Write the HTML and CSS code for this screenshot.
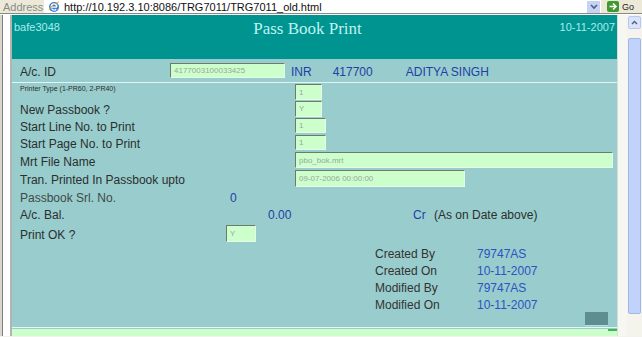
FILE: index.html
```html
<!DOCTYPE html>
<html>
<head>
<meta charset="utf-8">
<link rel="stylesheet" href="styles.css">
</head>
<body>
<div class="addrbar">
  <span class="addr-label">Address</span>
  <div class="addr-field">
    <svg class="ie-icon" width="12" height="12" viewBox="0 0 12 12"><circle cx="6" cy="6" r="5" fill="#3b7fd6"/><path d="M3 6.2h6M3.2 6c0-2 1.3-3 2.8-3s2.8 1 2.8 3M3.6 7.5c.5 1.2 1.3 1.7 2.4 1.7 1 0 1.7-.4 2.2-1.1" stroke="#fff" stroke-width="1.3" fill="none"/><path d="M1 9c2-4 6-7 10-8" stroke="#f0b030" stroke-width="1" fill="none"/></svg>
    <span class="url">http://10.192.3.10:8086/TRG7011/TRG7011_old.html</span>
    <span class="dd"><svg width="8" height="6" viewBox="0 0 8 6"><path d="M1 1l3 3 3-3" stroke="#4d6185" stroke-width="1.6" fill="none"/></svg></span>
  </div>
  <span class="go-btn"><svg width="12" height="11" viewBox="0 0 12 11"><rect width="12" height="11" rx="2" fill="#3d9a2e"/><path d="M2.5 5.5h6M6 2.5l3 3-3 3" stroke="#fff" stroke-width="1.6" fill="none"/></svg></span>
  <span class="go-text">Go</span>
</div>
<div class="window">
  <div class="leftframe"></div>
  <div class="page">
    <div class="header">
      <span class="user">bafe3048</span>
      <span class="title">Pass Book Print</span>
      <span class="hdate">10-11-2007</span>
    </div>
    <div class="form">
      <div class="acrow">
        <span class="lbl w150">A/c. ID</span>
        <div class="field acid">4177003100033425</div>
        <span class="val cur">INR</span>
        <span class="val sol">417700</span>
        <span class="val name">ADITYA SINGH</span>
      </div>
      <div class="sep"></div>
      <div class="row r17 top">
        <span class="lbl tiny w275">Printer Type (1-PR60, 2-PR40)</span>
        <div class="field f27 h16">1</div>
      </div>
      <div class="row r17">
        <span class="lbl w275">New Passbook ?</span>
        <div class="field f27 h16">Y</div>
      </div>
      <div class="row r17">
        <span class="lbl w275">Start Line No. to Print</span>
        <div class="field f31 h15">1</div>
      </div>
      <div class="row r17">
        <span class="lbl w275">Start Page No. to Print</span>
        <div class="field f31 h15">1</div>
      </div>
      <div class="row r18">
        <span class="lbl w275">Mrt File Name</span>
        <div class="field f318 h16">pbo_bok.mrt</div>
      </div>
      <div class="row r18">
        <span class="lbl w275">Tran. Printed In Passbook upto</span>
        <div class="field f170 h17">09-07-2006 00:00:00</div>
      </div>
      <div class="row r18">
        <span class="lbl w210 soft">Passbook Srl. No.</span>
        <span class="val">0</span>
      </div>
      <div class="row r17">
        <span class="lbl w248">A/c. Bal.</span>
        <span class="val bal">0.00</span>
        <span class="val cr">Cr</span>
        <span class="asof">(As on Date above)</span>
      </div>
      <div class="row r22">
        <span class="lbl w206">Print OK ?</span>
        <div class="field f30 h17">Y</div>
      </div>
      <div class="audit">
        <div class="arow"><span class="alabel">Created By</span><span class="aval">79747AS</span></div>
        <div class="arow"><span class="alabel">Created On</span><span class="aval">10-11-2007</span></div>
        <div class="arow"><span class="alabel">Modified By</span><span class="aval">79747AS</span></div>
        <div class="arow"><span class="alabel">Modified On</span><span class="aval">10-11-2007</span></div>
      </div>
      <div class="btnrow"><div class="hidden-btn"></div></div>
    </div>
    <div class="footline"></div>
    <div class="footer"><span class="footmark"></span></div>
  </div>
  <div class="gap"></div>
  <div class="scrollbar">
    <div class="sb-up"><svg width="7" height="5" viewBox="0 0 7 5"><path d="M1 4l2.5-2.5L6 4" stroke="#4d6185" stroke-width="1.4" fill="none"/></svg></div>
    <div class="sb-track"><div class="sb-thumb"></div></div>
  </div>
</div>
</body>
</html>
```
FILE: styles.css
```css
* { box-sizing: border-box; }
html, body { margin: 0; padding: 0; }
body {
  width: 642px;
  height: 337px;
  overflow: hidden;
  font-family: "Liberation Sans", Arial, sans-serif;
  background: #f3f2ec;
}

/* address bar */
.addrbar {
  height: 14px;
  background: #ece9d8;
  display: flex;
  align-items: center;
  border-bottom: 1px solid #8a8a80;
}
.addr-label {
  font-size: 11px;
  color: #8a8a8a;
  width: 44px;
  padding-left: 3px;
}
.addr-field {
  flex: 1;
  height: 13px;
  background: #fff;
  display: flex;
  align-items: center;
  margin-right: 4px;
}
.ie-icon { margin-left: 4px; margin-right: 4px; }
.url { font-size: 11px; color: #111; flex: 1; }
.dd {
  width: 13px;
  height: 12px;
  background: #c6d3f5;
  display: flex;
  align-items: center;
  justify-content: center;
  margin-right: 1px;
}
.go-btn { display: flex; margin-left: 2px; margin-right: 3px; }
.go-text { font-size: 9px; color: #222; width: 20px; }

/* window */
.window {
  display: flex;
  height: 322px;
  border-top: 1px solid #fff;
}
.leftframe {
  width: 12px;
  background: #fff;
  border-left: 2px solid #d8d6cc;
  box-shadow: inset 1px 0 0 #7e7e7e, inset -2px 0 0 #b5b5b0;
}
.page {
  width: 605px;
  background: #99cccc;
  display: flex;
  flex-direction: column;
}
.header {
  height: 44px;
  flex: none;
  background: #009490;
  display: flex;
  align-items: flex-start;
  padding: 3px 2px 0 2px;
  color: #a8ecec;
}
.user { font-size: 11px; width: 150px; padding-top: 3px; }
.title {
  flex: 1;
  text-align: center;
  font-family: "Liberation Serif", "Times New Roman", serif;
  font-size: 17px;
  color: #bff2f0;
  padding-right: 14px;
  padding-top: 1px;
}
.hdate { font-size: 11px; width: 150px; text-align: right; padding-top: 3px; }

.form {
  flex: 1;
  padding-left: 8px;
  display: flex;
  flex-direction: column;
}
.lbl { font-size: 12px; color: #2a2f2f; flex: none; padding-top: 3px; }
.soft { color: #3d4a4a; }
.tiny { font-size: 7px; color: #2a2f2f; padding-top: 1px; }
.w150 { width: 150px; }
.w275 { width: 275px; }
.w210 { width: 210px; }
.w248 { width: 248px; }
.w206 { width: 206px; }

.acrow {
  height: 23px;
  flex: none;
  display: flex;
  align-items: center;
}
.sep {
  height: 1px;
  flex: none;
  background: #e4f4f4;
  margin-left: -8px;
}
.row { display: flex; align-items: center; flex: none; }
.row.top { align-items: flex-start; padding-top: 1px; }
.r17 { height: 17px; }
.r18 { height: 18px; }
.r22 { height: 22px; }

.field {
  background: #ccffcc;
  border-top: 1px solid #6f7a6a;
  border-left: 1px solid #6f7a6a;
  border-right: 1px solid #e6fbe6;
  border-bottom: 1px solid #e6fbe6;
  color: #9aa89a;
  font-size: 8px;
  padding-left: 3px;
  display: flex;
  align-items: center;
  flex: none;
}
.acid { width: 115px; height: 15px; margin-left: 0; }
.f27 { width: 27px; }
.f30 { width: 30px; }
.f31 { width: 31px; }
.f170 { width: 170px; }
.f318 { width: 318px; }
.h15 { height: 15px; }
.h16 { height: 16px; }
.h17 { height: 17px; }

.val { font-size: 12px; color: #1f3fa8; padding-top: 3px; }
.cur { margin-left: 6px; }
.sol { margin-left: 21px; }
.name { margin-left: 33px; }
.bal { width: 145px; }
.cr { width: 21px; }
.asof { font-size: 12px; color: #2a2f2f; padding-top: 3px; }

.audit {
  display: flex;
  flex-direction: column;
  padding-left: 355px;
  flex: none;
}
.arow { height: 17px; display: flex; align-items: center; }
.alabel { font-size: 12px; color: #333; width: 102px; padding-top: 3px; }
.aval { font-size: 12px; color: #2a54c4; padding-top: 3px; }

.btnrow {
  display: flex;
  justify-content: flex-end;
  padding-right: 9px;
  flex: none;
}
.hidden-btn {
  width: 23px;
  height: 14px;
  background: #5e8e90;
  border-bottom: 1px solid #b8e0e0;
}
.footline { height: 1px; flex: none; background: #e8f8f8; }
.footer {
  height: 7px;
  flex: none;
  background: #ccffcc;
  margin-top: 1px;
  display: flex;
  justify-content: flex-end;
}
.footmark { width: 9px; height: 2px; background: #3fb94a; }

.gap {
  width: 10px;
  background: #f6f6f2;
  border-left: 1px solid #dcdcd6;
}
.scrollbar {
  width: 15px;
  background: #f4f3ec;
  display: flex;
  flex-direction: column;
  padding: 1px 1px 0 1px;
}
.sb-up {
  height: 13px;
  background: #d9e4fb;
  border: 1px solid #b7c8ef;
  border-radius: 2px;
  display: flex;
  align-items: center;
  justify-content: center;
}
.sb-track {
  flex: 1;
  padding-top: 9px;
  padding-bottom: 22px;
}
.sb-thumb {
  height: 100%;
  background: #c2d3fb;
  border: 1px solid #9fb6ea;
  border-radius: 2px;
}
```
